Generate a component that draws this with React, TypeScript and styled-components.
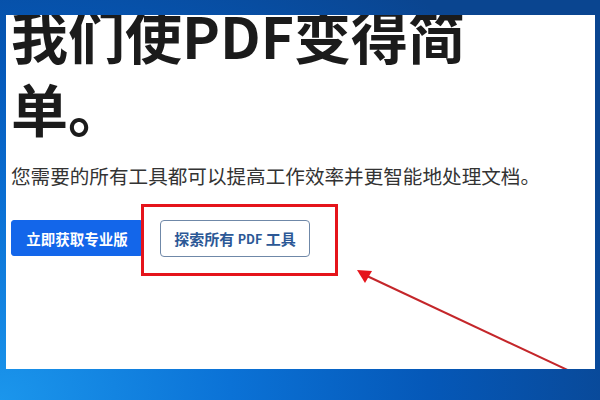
import React from "react";
import styled, { createGlobalStyle } from "styled-components";

const Global = createGlobalStyle`
  html, body { margin: 0; padding: 0; }
  body { font-family: "Noto Sans CJK SC", "Noto Sans", sans-serif; }
`;

const Desktop = styled.div`
  width: 600px;
  height: 400px;
  box-sizing: border-box;
  padding: 15px 5px 31px 6px;
  display: flex;
  background: radial-gradient(ellipse 110% 130% at 0% 100%, #1b96ec 0%, #0b72d6 35%, #0558b8 65%, #0a4590 100%);
`;

const Panel = styled.main`
  position: relative;
  flex: 1;
  background: #ffffff;
  overflow: hidden;
  padding: 0 5px;
  display: flex;
  flex-direction: column;
`;

const Heading = styled.h1`
  margin: -17px 0 0 0;
  font-family: "Noto Sans CJK SC", sans-serif;
  font-weight: 700;
  font-size: 57px;
  line-height: 73px;
  color: #1b1b1b;
  letter-spacing: 0;
`;

const Subtitle = styled.p`
  margin: 18px 0 0 0;
  font-family: "Noto Sans CJK SC", sans-serif;
  font-weight: 400;
  font-size: 19.6px;
  line-height: 28px;
  color: #333333;
  white-space: nowrap;
`;

const Actions = styled.div`
  margin-top: 30px;
  display: flex;
  gap: 17px;
  align-items: flex-start;
`;

const Button = styled.button<{ $variant: "primary" | "outline" }>`
  box-sizing: border-box;
  height: ${(p) => (p.$variant === "primary" ? "36px" : "37px")};
  width: ${(p) => (p.$variant === "primary" ? "132px" : "150px")};
  padding: 0;
  border-radius: ${(p) => (p.$variant === "primary" ? "3px" : "4px")};
  border: 1px solid ${(p) => (p.$variant === "primary" ? "#1366ea" : "#6f88a8")};
  background: ${(p) => (p.$variant === "primary" ? "#1366ea" : "#ffffff")};
  color: ${(p) => (p.$variant === "primary" ? "#ffffff" : "#2c5896")};
  font-family: "Noto Sans CJK SC", sans-serif;
  font-weight: 700;
  font-size: ${(p) => (p.$variant === "primary" ? "14.5px" : "15px")};
  display: flex;
  align-items: center;
  justify-content: center;
  white-space: pre;
`;

const Small = styled.span`
  font-size: 12.5px;
`;

const Annotation = styled.svg`
  position: absolute;
  inset: 0;
  width: 100%;
  height: 100%;
  pointer-events: none;
`;

export default function App() {
  return (
    <>
      <Global />
      <Desktop>
        <Panel>
          <Heading>
            我们使PDF变得简
            <br />
            单。
          </Heading>
          <Subtitle>您需要的所有工具都可以提高工作效率并更智能地处理文档。</Subtitle>
          <Actions>
            <Button $variant="primary">立即获取专业版</Button>
            <Button $variant="outline">
              探索所有 <Small>PDF</Small> 工具
            </Button>
          </Actions>
          <Annotation viewBox="0 0 589 354" preserveAspectRatio="none">
            <rect x="136.5" y="190.5" width="194" height="69" fill="none" stroke="#e5141b" strokeWidth="3" />
            <line x1="361" y1="261" x2="585" y2="366" stroke="#c4262a" strokeWidth="2" />
            <polygon points="351,255 366,256 359,268" fill="#e5141b" />
          </Annotation>
        </Panel>
      </Desktop>
    </>
  );
}
